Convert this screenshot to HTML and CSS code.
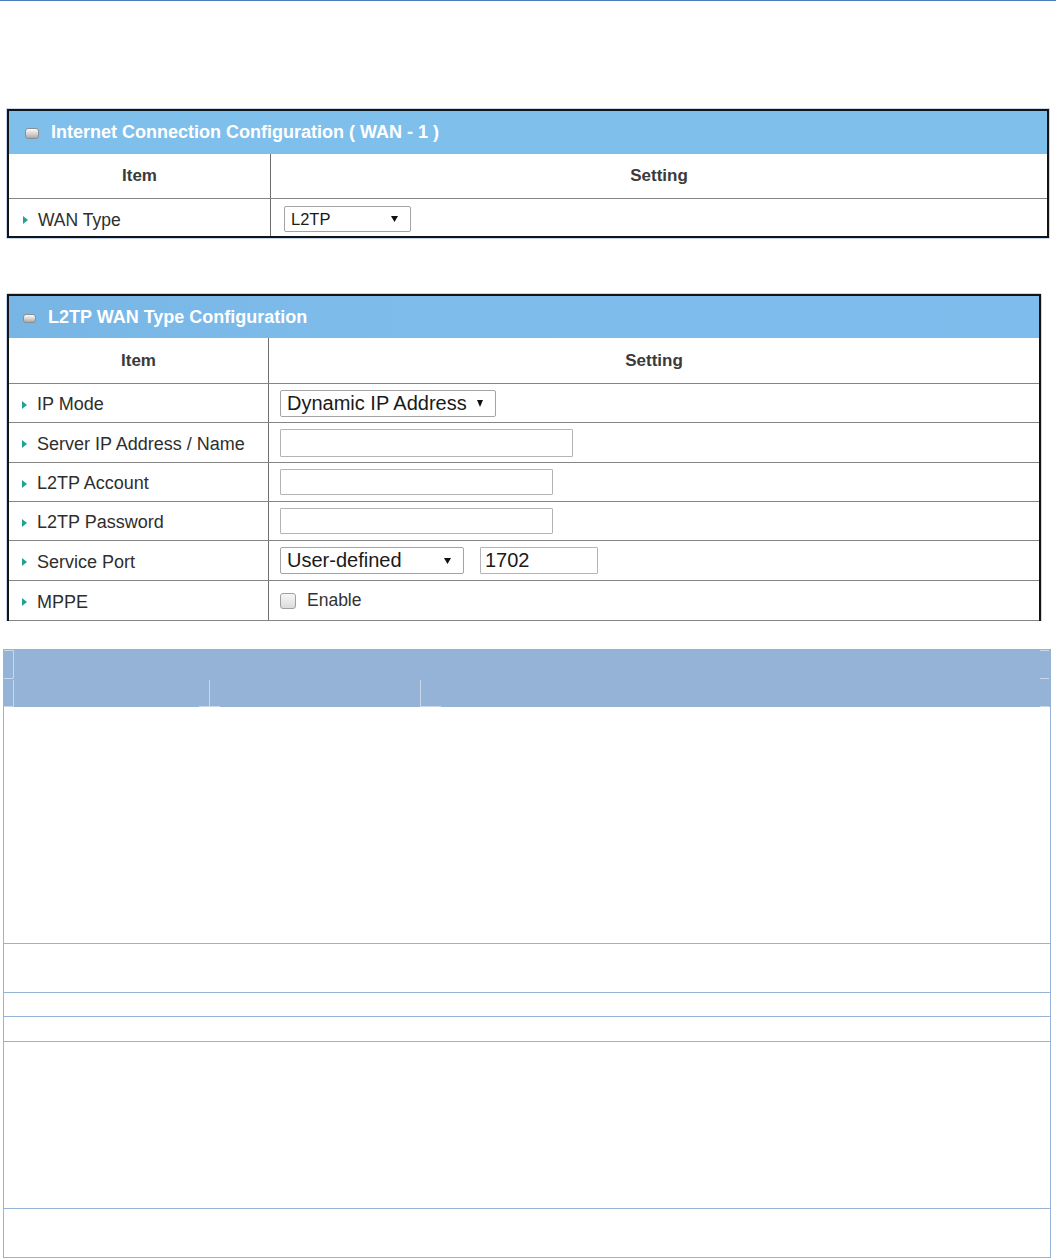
FILE: index.html
```html
<!DOCTYPE html>
<html lang="en">
<head>
<meta charset="utf-8">
<title>L2TP WAN Configuration</title>
<link rel="stylesheet" href="styles.css">
</head>
<body>
<div class="topline"></div>

<section class="panel panel-wan">
  <div class="phead"><span class="picon"></span><span>Internet Connection Configuration ( WAN - 1 )</span></div>
  <div class="prow colhead">
    <div class="c1">Item</div>
    <div class="c2 center">Setting</div>
  </div>
  <div class="prow last wan-row">
    <div class="c1 label"><span class="tri"></span>WAN Type</div>
    <div class="c2 ctrl">
      <div class="sel sel-wan"><span>L2TP</span><svg class="arr" width="7" height="6" viewBox="0 0 7 6"><polygon points="0,0 7,0 3.5,6" fill="#111"/></svg></div>
    </div>
  </div>
</section>

<section class="panel panel-l2tp">
  <div class="phead"><span class="picon"></span><span>L2TP WAN Type Configuration</span></div>
  <div class="prow colhead">
    <div class="c1">Item</div>
    <div class="c2 center">Setting</div>
  </div>
  <div class="prow r39">
    <div class="c1 label"><span class="tri"></span>IP Mode</div>
    <div class="c2 ctrl">
      <div class="sel sel-ip"><span>Dynamic IP Address</span><svg class="arr" width="6" height="7" viewBox="0 0 6 7"><polygon points="0,0 6,0 3,7" fill="#111"/></svg></div>
    </div>
  </div>
  <div class="prow r40">
    <div class="c1 label"><span class="tri"></span>Server IP Address / Name</div>
    <div class="c2 ctrl"><input class="txt txt-server" type="text"></div>
  </div>
  <div class="prow r39">
    <div class="c1 label"><span class="tri"></span>L2TP Account</div>
    <div class="c2 ctrl"><input class="txt txt-acc" type="text"></div>
  </div>
  <div class="prow r39">
    <div class="c1 label"><span class="tri"></span>L2TP Password</div>
    <div class="c2 ctrl"><input class="txt txt-acc" type="password"></div>
  </div>
  <div class="prow r40">
    <div class="c1 label"><span class="tri"></span>Service Port</div>
    <div class="c2 ctrl">
      <div class="sel sel-port"><span>User-defined</span><svg class="arr" width="7" height="6" viewBox="0 0 7 6"><polygon points="0,0 7,0 3.5,6" fill="#111"/></svg></div>
      <input class="txt txt-port" type="text" value="1702">
    </div>
  </div>
  <div class="prow r40">
    <div class="c1 label"><span class="tri"></span>MPPE</div>
    <div class="c2 ctrl"><label class="chk"><span class="box"></span>Enable</label></div>
  </div>
</section>

<section class="doc">
  <div class="doc-head">
    <svg width="1048" height="58" viewBox="0 0 1048 58">
      <g stroke="#c9d7eb" stroke-width="1" fill="none">
        <path d="M1 1.5H10.5M1 29.5H10.5M1 57.5H10.5M10.5 1V29M10.5 31V57.5"/>
        <path d="M206.5 31V57.5M196 57.5H217"/>
        <path d="M417.5 31V57.5M417.5 57.5H438"/>
        <path d="M1037 1.5H1046M1037 29.5H1046M1037 57.5H1046"/>
      </g>
    </svg>
  </div>
  <div class="doc-row d1"></div>
  <div class="doc-row d2"></div>
  <div class="doc-row d3"></div>
  <div class="doc-row d4"></div>
  <div class="doc-row d5"></div>
  <div class="doc-row d6"></div>
</section>
</body>
</html>
```

FILE: styles.css
```css
html, body {
  margin: 0;
  padding: 0;
  background: #ffffff;
}

body {
  font-family: "Liberation Sans", Arial, sans-serif;
  color: #333333;
}

.topline {
  height: 1px;
  background: #4a7ebb;
}

/* ---------- configuration panels ---------- */
.panel {
  box-sizing: border-box;
  border: 2px solid #141414;
  box-shadow: 0 0 0 1px #c8d8f1;
  background: #ffffff;
}

.panel-wan {
  margin: 108px 0 0 7px;
  width: 1042px;
}

.panel-l2tp {
  margin: 56px 0 0 7px;
  width: 1034px;
  border-bottom: none;
  box-shadow: -1px 0 0 0 #c8d8f1, 1px 0 0 0 #c8d8f1, 0 -1px 0 0 #c8d8f1;
}

.phead {
  display: flex;
  align-items: center;
  gap: 12px;
  padding-left: 16px;
  height: 43px;
  background: #7fbfec;
  color: #ffffff;
  font-size: 18px;
  font-weight: bold;
}

.panel-l2tp .phead {
  height: 42px;
  padding-left: 14px;
  background: linear-gradient(90deg, #77b5e5 0%, #7cbbea 30%, #7dbcec 100%);
}

.picon {
  flex: 0 0 auto;
  box-sizing: border-box;
  width: 14px;
  height: 11px;
  margin-top: 2px;
  border: 1px solid #8e8e8e;
  border-radius: 3px;
  background: linear-gradient(#fbfbfb 0%, #d6d6d6 50%, #a9a9a9 100%);
}

.panel-l2tp .picon {
  width: 13px;
  height: 9px;
  margin-top: 3px;
}

.prow {
  display: flex;
  box-sizing: border-box;
  border-bottom: 1px solid #858585;
}

.prow.last {
  border-bottom: none;
}

.c1 {
  flex: 0 0 262px;
  box-sizing: border-box;
  border-right: 1px solid #6e6e6e;
}

.panel-l2tp .c1 {
  flex-basis: 260px;
}

.c2 {
  flex: 1 1 auto;
}

.colhead {
  height: 45px;
  font-size: 17px;
  font-weight: bold;
  color: #3a3a3a;
}

.panel-l2tp .colhead {
  height: 46px;
}

.colhead .c1,
.colhead .center {
  display: flex;
  align-items: center;
  justify-content: center;
}

.wan-row {
  height: 37px;
}

.r39 {
  height: 39px;
}

.r40 {
  height: 40px;
}

.label {
  display: flex;
  align-items: center;
  padding: 5px 0 0 14px;
  font-size: 17.5px;
  color: #2e2e2e;
}

.panel-l2tp .label {
  padding: 3px 0 0 13px;
  font-size: 18px;
}

.tri {
  flex: 0 0 auto;
  width: 0;
  height: 0;
  margin-right: 10px;
  border-top: 4px solid transparent;
  border-bottom: 4px solid transparent;
  border-left: 5px solid #22a294;
}

.ctrl {
  display: flex;
  align-items: center;
  gap: 16px;
  padding-left: 13px;
}

.wan-row .ctrl {
  padding-top: 3px;
}

.panel-l2tp .ctrl {
  padding-left: 11px;
}

/* ---------- faux selects & inputs ---------- */
.sel {
  box-sizing: border-box;
  display: flex;
  align-items: center;
  justify-content: space-between;
  border: 1px solid #a4a4a4;
  border-radius: 2px;
  background: #ffffff;
  color: #1a1a1a;
}

.sel-wan {
  width: 127px;
  height: 26px;
  padding: 0 12px 0 6px;
  font-size: 16.5px;
}

.sel-ip {
  width: 216px;
  height: 27px;
  padding: 0 12px 0 6px;
  font-size: 20px;
}

.sel-port {
  width: 184px;
  height: 27px;
  padding: 0 12px 0 6px;
  font-size: 20px;
}

.arr {
  display: block;
  flex: 0 0 auto;
}

.txt {
  box-sizing: border-box;
  margin: 0;
  padding: 0 4px;
  border: 1px solid #b4b4b4;
  border-radius: 1px;
  background: #ffffff;
  font-family: "Liberation Sans", Arial, sans-serif;
  color: #1a1a1a;
  outline: none;
}

.txt-server {
  width: 293px;
  height: 28px;
}

.txt-acc {
  width: 273px;
  height: 26px;
}

.txt-port {
  width: 118px;
  height: 27px;
  font-size: 20px;
}

.chk {
  display: flex;
  align-items: center;
  gap: 11px;
  font-size: 17.5px;
  color: #333333;
}

.chk .box {
  box-sizing: border-box;
  width: 16px;
  height: 16px;
  border: 1px solid #a0a0a0;
  border-radius: 3px;
  background: linear-gradient(#f6f6f6, #dcdcdc);
}

/* ---------- document table ---------- */
.doc {
  margin: 28px 0 0 3px;
  width: 1048px;
}

.doc-head {
  height: 58px;
  background: #95b3d7;
}

.doc-head svg {
  display: block;
}

.doc-row {
  box-sizing: content-box;
  border-left: 1px solid #95b3d7;
  border-right: 1px solid #95b3d7;
  border-bottom: 1px solid #95b3d7;
}

.d1 { height: 236px; }
.d2 { height: 48px; }
.d3 { height: 23px; }
.d4 { height: 24px; }
.d5 { height: 166px; }
.d6 { height: 48px; }
```
